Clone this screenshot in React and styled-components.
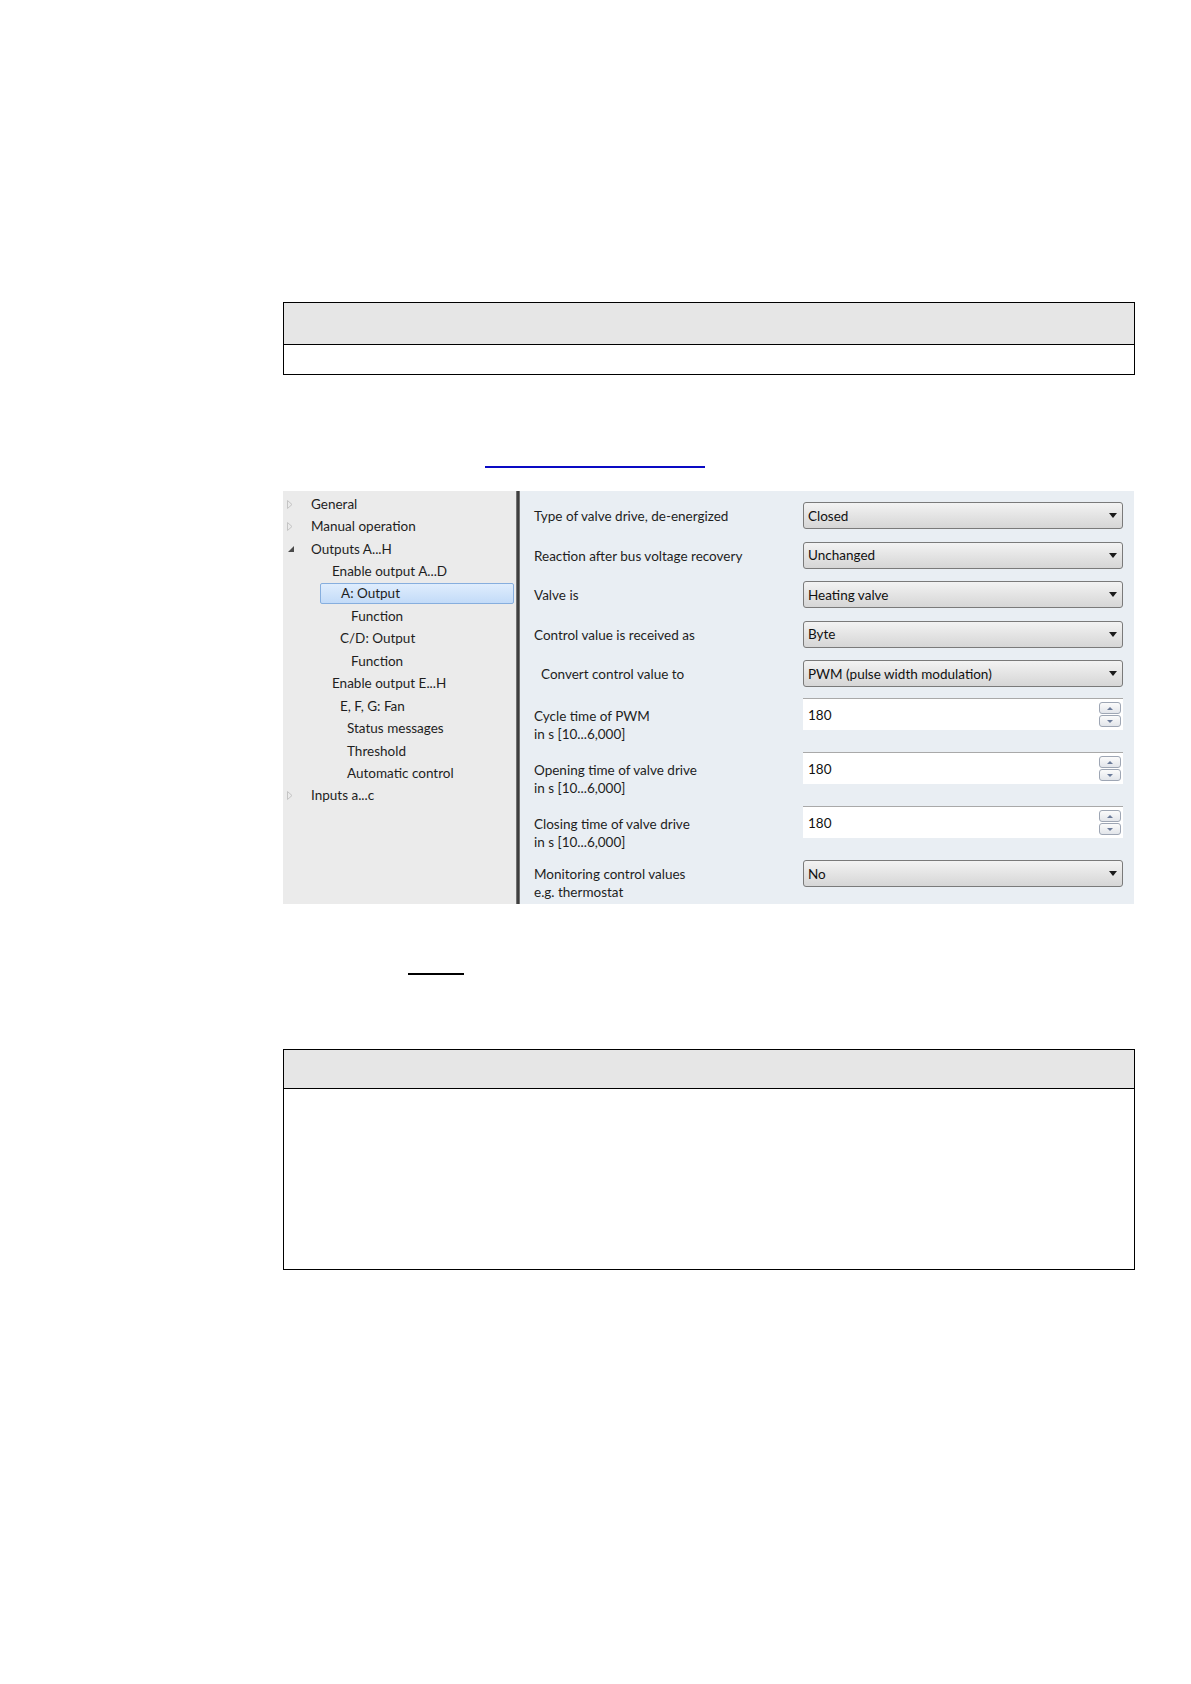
import React from 'react'
import styled, {createGlobalStyle} from 'styled-components'

const GlobalStyle = createGlobalStyle`
  body {
    margin: 0;
    background: #ffffff;
    font-family: Lato, "Open Sans", sans-serif;
  }
`

const treeItems = [
  {text: 'General', indent: 27, arrow: 'closed'},
  {text: 'Manual operation', indent: 27, arrow: 'closed'},
  {text: 'Outputs A...H', indent: 27, arrow: 'open'},
  {text: 'Enable output A...D', indent: 48},
  {text: 'A: Output', indent: 57, selected: true},
  {text: 'Function', indent: 67},
  {text: 'C/D: Output', indent: 56},
  {text: 'Function', indent: 67},
  {text: 'Enable output E...H', indent: 48},
  {text: 'E, F, G: Fan', indent: 56},
  {text: 'Status messages', indent: 63},
  {text: 'Threshold', indent: 63},
  {text: 'Automatic control', indent: 63},
  {text: 'Inputs a...c', indent: 27, arrow: 'closed'},
]

const params = [
  {label: ['Type of valve drive, de-energized'], kind: 'select', value: 'Closed', h: 39.5},
  {label: ['Reaction after bus voltage recovery'], kind: 'select', value: 'Unchanged', h: 39.5},
  {label: ['Valve is'], kind: 'select', value: 'Heating valve', h: 39.5},
  {label: ['Control value is received as'], kind: 'select', value: 'Byte', h: 39.5},
  {label: ['Convert control value to'], kind: 'select', value: 'PWM (pulse width modulation)', h: 38, inset: true},
  {label: ['Cycle time of PWM', 'in s [10...6,000]'], kind: 'spin', value: '180', h: 54},
  {label: ['Opening time of valve drive', 'in s [10...6,000]'], kind: 'spin', value: '180', h: 54},
  {label: ['Closing time of valve drive', 'in s [10...6,000]'], kind: 'spin', value: '180', h: 54},
  {label: ['Monitoring control values', 'e.g. thermostat'], kind: 'select', value: 'No', h: 30},
]

const TreeArrow = ({type}) => {
  if (type === 'open') {
    return (
      <svg width="8" height="8" viewBox="0 0 8 8">
        <polygon points="7,1 7,7 1,7" fill="#4a4a4a" />
      </svg>
    )
  }
  if (type === 'closed') {
    return (
      <svg width="6" height="9" viewBox="0 0 6 9">
        <polygon points="0.5,0.5 5,4.5 0.5,8.5" fill="none" stroke="#c4c4c4" strokeWidth="1" />
      </svg>
    )
  }
  return null
}

const SelectBox = ({value}) => (
  <Select>
    <span>{value}</span>
    <svg width="8" height="5" viewBox="0 0 8 5">
      <polygon points="0,0 8,0 4,5" fill="#1a1a1a" />
    </svg>
  </Select>
)

const SpinBox = ({value}) => (
  <Spin>
    <span>{value}</span>
    <SpinButtons>
      <SpinBtn>
        <svg width="6" height="3" viewBox="0 0 6 3"><polygon points="0,3 6,3 3,0" fill="#6b7b99" /></svg>
      </SpinBtn>
      <SpinBtn>
        <svg width="6" height="3" viewBox="0 0 6 3"><polygon points="0,0 6,0 3,3" fill="#6b7b99" /></svg>
      </SpinBtn>
    </SpinButtons>
  </Spin>
)

export default function App() {
  return (
    <Page>
      <GlobalStyle />
      <DocTable>
        <DocHead $h={41} />
        <DocBody $h={29} />
      </DocTable>

      <LineRow $mt={91}>
        <Underline $left={202} $w={220} $color="#0a0ac4" />
      </LineRow>

      <Shot>
        <TreePanel>
          {treeItems.map((item, i) => (
            <TreeRow key={i}>
              <Gutter>
                <TreeArrow type={item.arrow} />
              </Gutter>
              <TreeText $indent={item.indent} $selected={item.selected}>
                {item.text}
              </TreeText>
            </TreeRow>
          ))}
        </TreePanel>
        <Splitter />
        <ParamPanel>
          {params.map((p, i) => (
            <ParamRow key={i} $h={p.h}>
              <ParamLabel $top={p.kind === 'spin' ? 9 : 5} $inset={p.inset}>
                {p.label.map((l, j) => (
                  <div key={j}>{l}</div>
                ))}
              </ParamLabel>
              {p.kind === 'select' ? <SelectBox value={p.value} /> : <SpinBox value={p.value} />}
            </ParamRow>
          ))}
        </ParamPanel>
      </Shot>

      <LineRow $mt={69}>
        <Underline $left={125} $w={56} $color="#000000" />
      </LineRow>

      <DocTable $mt={74}>
        <DocHead $h={38} />
        <DocBody $h={180} />
      </DocTable>
    </Page>
  )
}

const Page = styled.div`
  width: 852px;
  padding: 302px 0 300px 283px;
`

const DocTable = styled.div`
  margin-top: ${p => p.$mt || 0}px;
  border: 1px solid #000;
  display: flex;
  flex-direction: column;
`

const DocHead = styled.div`
  height: ${p => p.$h}px;
  background: #e6e6e6;
  border-bottom: 1px solid #000;
`

const DocBody = styled.div`
  height: ${p => p.$h}px;
  background: #fff;
`

const LineRow = styled.div`
  margin-top: ${p => p.$mt}px;
  height: 2px;
  display: flex;
`

const Underline = styled.span`
  margin-left: ${p => p.$left}px;
  width: ${p => p.$w}px;
  height: 2px;
  background: ${p => p.$color};
`

const Shot = styled.div`
  margin-top: 23px;
  width: 851px;
  height: 413px;
  display: flex;
  font-size: 13.5px;
  color: #1e1e1e;
`

const TreePanel = styled.div`
  width: 233px;
  background: #ebebeb;
  padding-top: 2px;
  box-sizing: border-box;
`

const TreeRow = styled.div`
  height: 22.45px;
  display: flex;
  align-items: center;
`

const Gutter = styled.div`
  width: 27px;
  flex: none;
  display: flex;
  align-items: center;
  padding-left: 4px;
  box-sizing: border-box;
`

const TreeText = styled.div`
  flex: 1;
  box-sizing: border-box;
  height: 21px;
  line-height: 19px;
  white-space: nowrap;
  margin-left: ${p => (p.$selected ? 10 : p.$indent - 27)}px;
  padding-left: ${p => (p.$selected ? p.$indent - 37 : 0)}px;
  margin-right: 2px;
  border: 1px solid ${p => (p.$selected ? '#86aede' : 'transparent')};
  border-radius: 2px;
  background: ${p => (p.$selected ? 'linear-gradient(#dfedfd, #c3dbf8)' : 'transparent')};
`

const Splitter = styled.div`
  width: 4px;
  flex: none;
  background: linear-gradient(90deg, #8a8a8a, #3c3c3c 40%, #3c3c3c 70%, #9a9a9a);
`

const ParamPanel = styled.div`
  flex: 1;
  background: #e9eef3;
  padding: 11px 11px 0 14px;
  box-sizing: border-box;
`

const ParamRow = styled.div`
  height: ${p => p.$h}px;
  display: grid;
  grid-template-columns: 1fr 320px;
  align-items: start;
`

const ParamLabel = styled.div`
  padding-top: ${p => p.$top}px;
  padding-left: ${p => (p.$inset ? 7 : 0)}px;
  line-height: 18px;
  white-space: nowrap;
`

const Select = styled.div`
  height: 27px;
  box-sizing: border-box;
  border: 1px solid #7a7a7a;
  border-radius: 3px;
  background: linear-gradient(#f3f3f3, #e4e4e4 50%, #d6d6d6);
  display: flex;
  align-items: center;
  justify-content: space-between;
  padding: 0 5px 0 4px;
  color: #111;
`

const Spin = styled.div`
  height: 32px;
  box-sizing: border-box;
  background: #fff;
  border-top: 1px solid #a9a9a9;
  display: flex;
  align-items: center;
  justify-content: space-between;
  padding: 0 2px 0 5px;
  color: #111;
`

const SpinButtons = styled.div`
  display: flex;
  flex-direction: column;
  gap: 1px;
`

const SpinBtn = styled.div`
  width: 22px;
  height: 12px;
  box-sizing: border-box;
  border: 1px solid #9ea6b4;
  border-radius: 3px;
  background: linear-gradient(#fbfbfb, #e2e5ea);
  display: flex;
  align-items: center;
  justify-content: center;
`
